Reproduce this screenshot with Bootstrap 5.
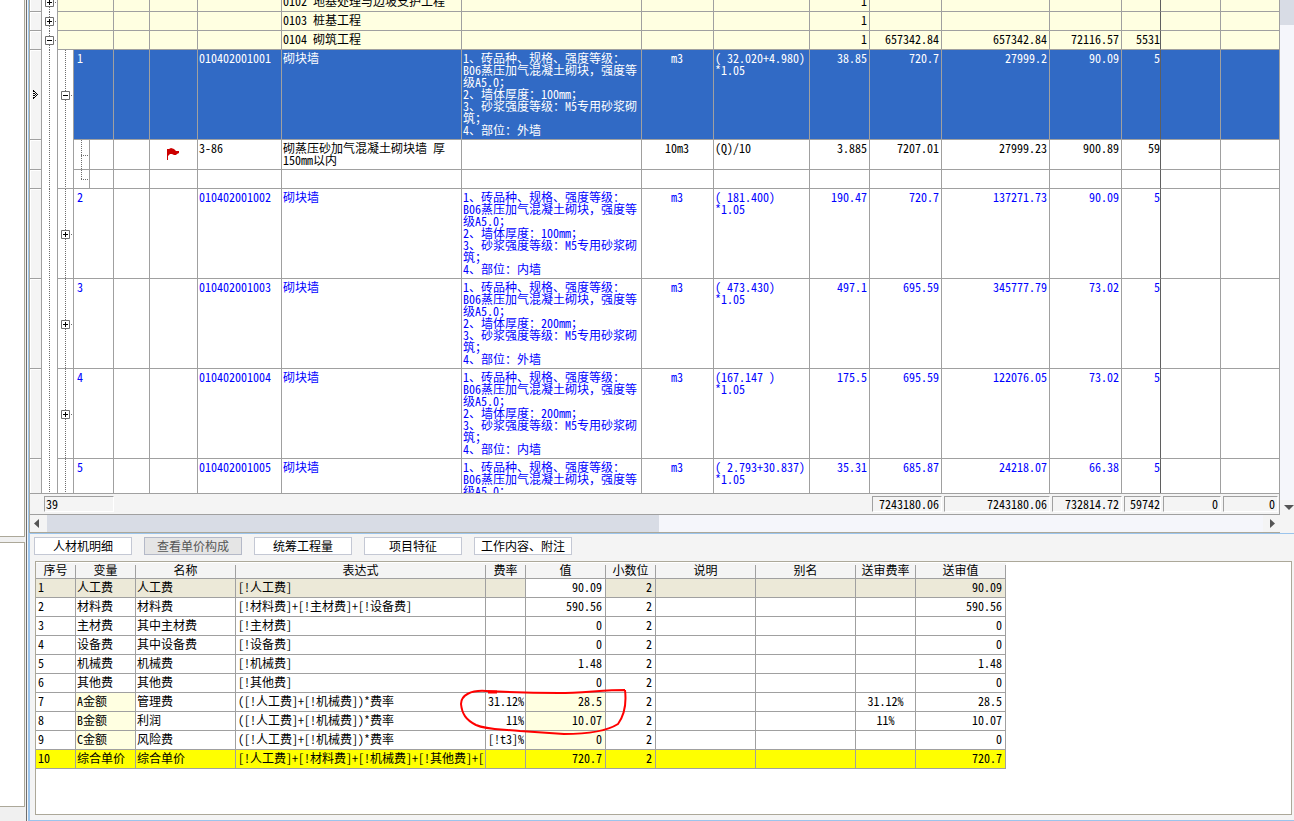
<!DOCTYPE html>
<html lang="zh-CN">
<head>
<meta charset="utf-8">
<meta name="viewport" content="width=device-width, initial-scale=1">
<title>工程量清单</title>
<link href="https://cdn.jsdelivr.net/npm/bootstrap@5.3.0/dist/css/bootstrap.min.css" rel="stylesheet">
<style>
:root{--line:#a0a0a0;--face:#f4f4f4;--olive:#aca899;--blue:#9bc4ec;--dot:#6e6e6e}
body{font:12px/12px "Noto Sans CJK SC",sans-serif;font-feature-settings:"hwid" 1;color:#000;background:var(--face)}
button{font:inherit;font-feature-settings:inherit}
.wide{font-feature-settings:"hwid" 0}
.side{width:27px;border-right:1px solid #6e6e6e;padding-right:1px;background:#f0f0f0}
.side-box{background:#fff;border:solid var(--olive);border-width:0 1px 1px 0}
.side-low{border-top-width:1px}
.work{border-left:2px solid var(--blue);border-bottom:1px solid var(--blue);margin-left:1px;min-width:0}
.upper{border-bottom:1px solid var(--blue);min-height:0;margin-left:-1px}
.sheet-wrap,.sum-wrap{border-left:1px solid var(--olive)}
.sheet,.costs{table-layout:fixed;border-collapse:separate;border-spacing:0}
.sheet{width:100%;margin-top:-7px}
.sheet td,.sheet th{border:solid var(--line);border-width:0 1px 1px 0;padding:2px 2px 0 1px;vertical-align:top;font-weight:400;overflow:hidden}
.sheet tr{height:19px;background:#fff}
.sheet tr.tall{height:90px;color:#00f}
.sheet tr.sub{height:30px}
.sheet tr.group{background:#ffffe1}
.sheet tr.picked td{background:#316ac5;color:#fff}
.sheet tr th{background:var(--face);box-shadow:inset 1px 1px #fff;padding:0;vertical-align:middle;line-height:0}
.sheet td.no{padding-left:3px}
.sheet .n{text-align:right;white-space:nowrap}
.sheet .cut{border-right-color:#5f5f5f;padding-right:0}
.sheet .d{white-space:pre-wrap}
.sheet td.tree,.sheet tr.picked td.tree{background:#fff repeating-linear-gradient(var(--dot) 0 1px,transparent 1px 2px) 7px 0/1px 100% no-repeat;padding:1px 0 0;vertical-align:middle;line-height:0;overflow:visible}
.sheet td.tree.open{border-bottom:0;padding-top:0}
.sheet td.leaf{background:repeating-linear-gradient(var(--dot) 0 1px,transparent 1px 2px) 7px 0/1px 100% no-repeat,repeating-linear-gradient(90deg,var(--dot) 0 1px,transparent 1px 2px) 7px 15px/8px 1px no-repeat}
.sheet td.leaf.last{background-size:1px 9px,8px 1px;background-position:7px 0,7px 9px}
.toggle{display:block;width:12px;height:9px;margin-left:3px;padding:0;border:0;background:none}
.toggle svg{display:block}
.vbar{width:14px;background:#f5f6fb}
.vbar-thumb{height:25px;background:#d8dce5}
.sum{height:22px;border:solid var(--line);border-width:1px 1px 1px 0;padding:2px 0;background:var(--face);z-index:1}
.sum-box{border:1px solid #fff;border-top-color:var(--line);border-left-color:var(--line);margin:0 1px;padding:1px 2px 0 1px;flex:none;text-align:right;overflow:hidden}
.hbar{height:18px;border:solid var(--olive);border-width:0 0 1px 1px;background:#f5f6fb;margin-right:14px}
.hbar-thumb{background:#d8dce5;flex:0 1 612px}
.arrow{border:0;padding:0;background:var(--face);line-height:0}
.tabs{padding:3px 0 6px 4px;gap:12px}
.tab-btn{width:98px;height:18px;padding:0;border:1px solid #c4c8d4;background:#fff;color:#000}
.tab-btn.active{background:#e5e5e5;border-color:#b4b9c8;color:#555}
.panel{border:1px solid var(--olive);background:#fff;margin:0 2px 5px 5px;padding-bottom:45px}
.costs{width:970px}
.costs th{height:17px;border-bottom:1px solid var(--line);font-weight:400;text-align:center;padding:0 1px 0 0;background:linear-gradient(var(--line),var(--line)) 100% 3px/1px 100% no-repeat var(--face);box-shadow:inset 0 1px #fff}
.costs td{height:19px;border:solid var(--line);border-width:0 1px 1px 0;padding:2px 1px 0;white-space:nowrap;overflow:hidden;vertical-align:top}
.costs td:first-child,.costs td:nth-child(4){padding-left:2px}
.costs td.n{text-align:right;padding-right:3px}
.costs td.c{text-align:center}
.costs .now td{background:#ece9d8}
.costs .now td.edit{background:#fff}
.costs td.pale{background:#ffffe1}
.costs .total td{background:#ff0}
.ring{position:absolute;left:423px;top:125px;pointer-events:none}
</style>
</head>
<body>
<div class="d-flex vh-100 overflow-hidden">
  <aside class="side d-flex flex-column flex-shrink-0">
    <div class="side-box flex-grow-1"></div>
    <div class="side-box side-low" style="height:265px;margin-top:5px"></div>
    <div style="height:14px"></div>
  </aside>
  <main class="work flex-grow-1 d-flex flex-column">
    <section class="upper flex-grow-1 d-flex flex-column position-relative">
      <div class="d-flex flex-grow-1 overflow-hidden">
        <div class="flex-grow-1 d-flex flex-column overflow-hidden">
          <div class="sheet-wrap flex-grow-1 overflow-hidden" style="height:0">
            <table class="sheet">
              <colgroup><col style="width:12px"><col style="width:16px"><col style="width:16px"><col style="width:16px"><col style="width:24px"><col style="width:36px"><col style="width:48px"><col style="width:84px"><col style="width:180px"><col style="width:180px"><col style="width:72px"><col style="width:96px"><col style="width:60px"><col style="width:72px"><col style="width:108px"><col style="width:72px"><col style="width:39px"><col style="width:60px"><col></colgroup>
              <tbody id="items"></tbody>
            </table>
          </div>
          <div class="sum-wrap">
            <div class="sum d-flex">
              <div class="sum-box text-start" style="width:70px;margin-left:14px">39</div>
              <div style="width:756px;flex:none"></div>
              <div class="sum-box" style="width:70px">7243180.06</div>
              <div class="sum-box" style="width:106px">7243180.06</div>
              <div class="sum-box" style="width:70px">732814.72</div>
              <div class="sum-box" style="width:37px;padding-right:0">59742</div>
              <div class="sum-box" style="width:58px">0</div>
              <div class="sum-box flex-fill">0</div>
            </div>
          </div>
        </div>
        <div class="vbar d-flex flex-column justify-content-between flex-shrink-0">
          <div class="vbar-thumb"></div>
          <button class="arrow" aria-label="向下"><svg width="14" height="15"><path d="M4 5h10l-5 5z" fill="#555"/></svg></button>
        </div>
      </div>
      <div class="hbar d-flex">
        <button class="arrow" aria-label="向左"><svg width="17" height="17"><path d="M9 4v9l-5-4.5z" fill="#555"/></svg></button>
        <div class="hbar-thumb"></div>
        <button class="arrow ms-auto" aria-label="向右"><svg width="17" height="17"><path d="M7 4v9l5-4.5z" fill="#555"/></svg></button>
      </div>
    </section>
    <section>
      <div class="tabs d-flex">
        <button class="tab-btn">人材机明细</button>
        <button class="tab-btn active">查看单价构成</button>
        <button class="tab-btn">统筹工程量</button>
        <button class="tab-btn">项目特征</button>
        <button class="tab-btn">工作内容、附注</button>
      </div>
      <div class="panel position-relative">
        <table class="costs">
          <colgroup><col style="width:40px"><col style="width:60px"><col style="width:100px"><col style="width:250px"><col style="width:40px"><col style="width:80px"><col style="width:50px"><col style="width:100px"><col style="width:100px"><col style="width:60px"><col style="width:90px"></colgroup>
          <thead><tr><th>序号</th><th>变量</th><th>名称</th><th>表达式</th><th>费率</th><th>值</th><th>小数位</th><th>说明</th><th>别名</th><th>送审费率</th><th>送审值</th></tr></thead>
          <tbody id="costs"></tbody>
        </table>
        <svg class="ring" width="170" height="52" fill="none" stroke="#f00" stroke-width="2"><path d="M166 3C145 3 122 6 100 6C75 6 45 5 27 4C12 3 2 8 2 17C3 27 7 33 17 38C28 43 42 42 61 44L105 47C130 47 148 44 159 37C164 30 168 20 166 3"/><path d="M29 5h9" stroke-width="3"/></svg>
      </div>
    </section>
  </main>
</div>
<script>
const box = open => `<button class="toggle" aria-label="${open ? '折叠' : '展开'}"><svg width="12" height="9"><path d="M.5.5h8v8h-8z" fill="#fff" stroke="#6e6e6e"/><path d="M2 4.5h5${open ? '' : 'M4.5 2v5'}" stroke="#000"/><path d="M10 4.5h1" stroke="#6e6e6e"/></svg></button>`;
const num = list => list.map((v, i) => `<td class="n${i === 4 ? ' cut' : ''}">${v}</td>`).join('') + '<td></td><td></td>';
const group = (name, nums, open) => `<tr class="group"><th></th><td class="tree open">${box(open)}</td><td colspan="3"></td><td></td><td></td><td></td><td class="text-nowrap">${name}</td><td></td><td></td><td></td>${num(nums)}</tr>`;
const pointer = '<svg width="11" height="9"><path d="M3 0h1v2h-1zM4 1h1v1h-1zM5 2h1v1h-1zM6 3h1v1h-1zM7 4h1v1h-1zM6 5h1v1h-1zM5 6h1v1h-1zM4 7h1v1h-1zM3 7h1v2h-1zM3 3h1v1h-1zM5 4h1v1h-1zM3 5h1v1h-1zM4 3h1v1h-1zM4 5h1v1h-1z"/></svg>';
const spec = (thick, wall) => `1、砖品种、规格、强度等级：
B06蒸压加气混凝土砌块<span class="wide">，</span>强度等
级A5.0；` + (thick ? `
2、墙体厚度：${thick}mm；
3、砂浆强度等级：M5专用砂浆砌
筑；
4、部位：${wall}` : '');
const item = (no, thick, wall, qty, nums, open) => `<tr class="tall${open ? ' picked' : ''}"><th>${open ? pointer : ''}</th><td class="tree open"></td><td class="tree${open ? ' open' : ''}">${no < 5 ? box(open) : ''}</td><td colspan="2" class="no">${no}</td><td></td><td></td><td>01040200100${no}</td><td>砌块墙</td><td class="d">${spec(thick, wall)}</td><td class="text-center">m3</td><td class="d">${qty}
*1.05</td>${num(nums)}</tr>`;
const flag = '<svg class="d-block mx-auto mt-1" width="14" height="14"><path d="M1 3h2l2-1 3 1 2 2h3v2l-2 1-1 1H8L6 8H4L2 10v4H1z" fill="#c00"/></svg>';
const sub = (last, cells) => `<tr class="${last ? '' : 'sub'}"><th></th><td class="tree open"></td><td class="tree${last ? '' : ' open'}"></td><td class="leaf${last ? ' last' : ''}"></td>${cells}</tr>`;
document.getElementById('items').innerHTML =
  group('0102 地基处理与边坡支护工程', [1, '', '', '', ''], false) +
  group('0103 桩基工程', [1, '', '', '', ''], false) +
  group('0104 砌筑工程', [1, 657342.84, 657342.84, 72116.57, 5531], true) +
  item(1, 100, '外墙', '( 32.020+4.980)', ['38.85', '720.7', '27999.2', '90.09', '5'], true) +
  sub(false, `<td></td><td></td><td>${flag}</td><td>3-86</td><td>砌蒸压砂加气混凝土砌块墙 厚150mm以内</td><td></td><td class="text-center">10m3</td><td>(Q)/10</td>${num(['3.885', '7207.01', '27999.23', '900.89', '59'])}`) +
  sub(true, '<td></td>'.repeat(8) + num(['', '', '', '', ''])) +
  item(2, 100, '内墙', '( 181.400)', ['190.47', '720.7', '137271.73', '90.09', '5'], false) +
  item(3, 200, '外墙', '( 473.430)', ['497.1', '695.59', '345777.79', '73.02', '5'], false) +
  item(4, 200, '内墙', '(167.147 )', ['175.5', '695.59', '122076.05', '73.02', '5'], false) +
  item(5, 0, '', '( 2.793+30.837)', ['35.31', '685.87', '24218.07', '66.38', '5'], false);

const rate = '([!人工费]+[!机械费])*费率';
document.getElementById('costs').innerHTML = [
  ['人工费', '人工费', '[!人工费]', '', '90.09'],
  ['材料费', '材料费', '[!材料费]+[!主材费]+[!设备费]', '', '590.56'],
  ['主材费', '其中主材费', '[!主材费]', '', '0'],
  ['设备费', '其中设备费', '[!设备费]', '', '0'],
  ['机械费', '机械费', '[!机械费]', '', '1.48'],
  ['其他费', '其他费', '[!其他费]', '', '0'],
  ['A金额', '管理费', rate, '31.12%', '28.5'],
  ['B金额', '利润', rate, '11%', '10.07'],
  ['C金额', '风险费', rate, '[!t3]%', '0'],
  ['综合单价', '综合单价', '[!人工费]+[!材料费]+[!机械费]+[!其他费]+[', '', '720.7']
].map(([key, name, expr, pct, val], i) => {
  const pale = i > 5 && i < 9 ? ' pale' : '';
  return `<tr class="${i === 0 ? 'now' : i === 9 ? 'total' : ''}"><td>${i + 1}</td><td class="${pale}">${key}</td><td>${name}</td><td>${expr}</td><td class="text-end">${pct}</td><td class="n edit${pale}">${val}</td><td class="n">2</td><td></td><td></td><td class="c">${i === 8 ? '' : pct}</td><td class="n">${val}</td></tr>`;
}).join('');
</script>
<script src="https://cdn.jsdelivr.net/npm/bootstrap@5.3.0/dist/js/bootstrap.bundle.min.js"></script>
</body>
</html>
